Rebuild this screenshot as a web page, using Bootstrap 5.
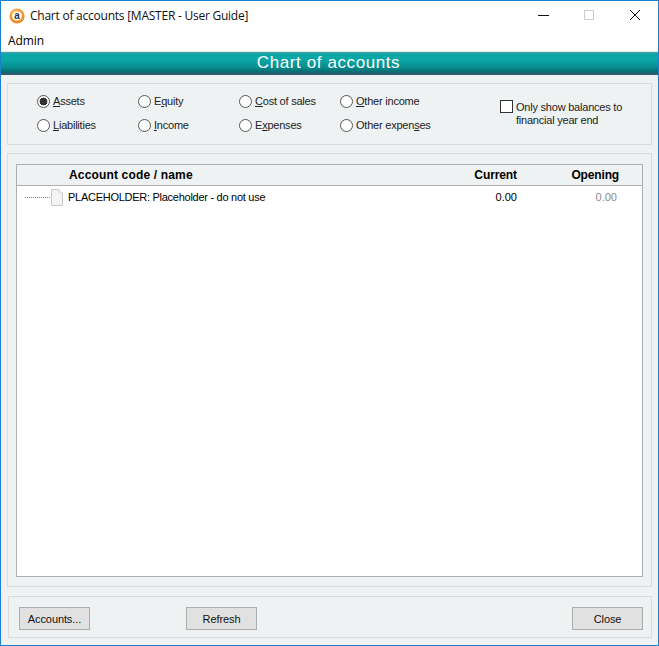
<!DOCTYPE html>
<html lang="en">
<head>
<meta charset="utf-8">
<title>Chart of accounts</title>
<link rel="stylesheet" href="https://cdn.jsdelivr.net/npm/bootstrap@5.3.0/dist/css/bootstrap.min.css">
<style>
html,body{height:100%;}
body{background:#eff2f3;font-family:"Liberation Sans",Arial,sans-serif;font-size:12px;color:#000;overflow:hidden;}
.win{width:659px;height:646px;border:1px solid #1b80d0;background:#eff2f3;}
.tbar{height:30px;background:#fff;padding-left:8px;font-family:"Open Sans",sans-serif;font-size:12px;letter-spacing:-.24px;color:#111;flex:none;}
.appic{margin-right:5px;flex:none;}
.wbtns{width:120px;}
.wbtns svg{display:block;}
.menub{height:20px;background:#fff;padding-left:7px;font-family:"Open Sans",sans-serif;font-size:12px;line-height:20px;letter-spacing:-.1px;flex:none;}
.gapb{height:1px;background:#e4e6e7;flex:none;}
.hband{height:23px;flex:none;padding-right:2px;background:linear-gradient(#5a9ea2 0,#09a9a8 2px,#0aa5a4 8px,#078f8f 15px,#056c70 20px,#33596e 22px);color:#fff;font-size:17px;line-height:22px;text-align:center;letter-spacing:.6px;}
.pnl{border:1px solid #d8dcdd;background:#eff2f3;flex:none;}
.pfilter{height:62px;margin:8px 6px 0 6px;padding:10px 0 0 29px;}
.rgrid{display:grid;grid-template-columns:repeat(4,101px);grid-auto-rows:24px;width:404px;flex:none;}
.ritem{display:flex;align-items:center;gap:3px;margin:0;height:14px;}
.ritem .form-check-input{margin:0;width:13px;height:13px;background-color:#fff;border:1.5px solid #555;flex:none;}
.ritem .form-check-input:checked{background-color:#fff;border-color:#555;background-image:radial-gradient(circle,#333 0 3.6px,transparent 4.2px);background-size:100% 100%;}
.ritem .form-check-input:focus{box-shadow:none;}
.chkbox{margin-top:6px;margin-left:59px;gap:3px;line-height:13px;height:28px;}
.chkbox .form-check-input{width:13px;height:13px;margin:0;border:1.5px solid #333;border-radius:0;background-color:#fff;flex:none;}
.lbl{font-size:11px;color:#222;letter-spacing:-.22px;white-space:nowrap;padding-top:1px;}
.plist{height:434px;margin:8px 6px 0 6px;padding:10px 8px 9px 8px;}
.tblwrap{height:100%;border:1px solid #acafb0;background:#fff;}
.thd{height:21px;background:#eff2f3;border-bottom:1px solid #acafb0;font-weight:700;font-size:12px;letter-spacing:.16px;line-height:20px;}
.cname{width:440px;padding-left:52px;}
.ccur{width:60px;text-align:right;letter-spacing:-.1px;}
.copen{width:102px;text-align:right;letter-spacing:-.15px;}
.trow{height:23px;padding-left:8px;font-size:11px;letter-spacing:-.27px;line-height:23px;}
.dots{width:25px;border-top:1px dotted #777;height:0;}
.fic{margin:0 4px 0 0;flex:none;}
.rname{width:398px;white-space:nowrap;}
.rcur{width:51px;text-align:right;letter-spacing:0;}
.ropen{width:100px;text-align:right;color:#8c8c8c;letter-spacing:0;}
.pfoot{height:42px;margin:9px 6px 0 7px;padding:10px 8px 0 10px;}
.wbtn{width:71px;height:23px;padding:0;font-size:11px;background:#e1e1e1;border:1px solid #adadad;border-radius:0;color:#111;line-height:20px;letter-spacing:-.1px;}
.wbtn:hover{background:#e1e1e1;}
.refresh{margin-left:96px;}
.closeb{margin-left:auto;}
</style>
</head>
<body>
<div class="win d-flex flex-column">
  <div class="tbar d-flex align-items-center">
    <svg width="16" height="16" viewBox="0 0 16 16" class="appic">
      <defs><radialGradient id="g" cx=".4" cy=".3" r=".8"><stop offset="0" stop-color="#ffc060"/><stop offset="1" stop-color="#ec7d10"/></radialGradient></defs>
      <circle cx="8" cy="8" r="7.6" fill="url(#g)"/>
      <ellipse cx="8" cy="8" rx="5" ry="4.6" fill="#fff"/>
      <text x="8" y="11.2" font-size="10" font-weight="700" text-anchor="middle" font-family="Liberation Sans" fill="#333">a</text>
    </svg>
    <span>Chart of accounts [MASTER - User Guide]</span>
    <div class="ms-auto d-flex align-items-center wbtns">
      <svg width="120" height="16" viewBox="0 0 120 16">
        <path d="M0 7.5H11" stroke="#111" fill="none"/>
        <rect x="46.5" y="2.5" width="9" height="9" stroke="#ccc" fill="none"/>
        <path d="M92 2L102 12M102 2L92 12" stroke="#111" fill="none"/>
      </svg>
    </div>
  </div>
  <div class="menub">Admin</div>
  <div class="gapb"></div>
  <div class="hband">Chart of accounts</div>

  <div class="pnl pfilter d-flex">
    <div class="rgrid">
      <label class="ritem"><input class="form-check-input" type="radio" name="t" checked><span class="lbl"><u>A</u>ssets</span></label>
      <label class="ritem"><input class="form-check-input" type="radio" name="t"><span class="lbl">E<u>q</u>uity</span></label>
      <label class="ritem"><input class="form-check-input" type="radio" name="t"><span class="lbl"><u>C</u>ost of sales</span></label>
      <label class="ritem"><input class="form-check-input" type="radio" name="t"><span class="lbl"><u>O</u>ther income</span></label>
      <label class="ritem"><input class="form-check-input" type="radio" name="t"><span class="lbl"><u>L</u>iabilities</span></label>
      <label class="ritem"><input class="form-check-input" type="radio" name="t"><span class="lbl"><u>I</u>ncome</span></label>
      <label class="ritem"><input class="form-check-input" type="radio" name="t"><span class="lbl">E<u>x</u>penses</span></label>
      <label class="ritem"><input class="form-check-input" type="radio" name="t"><span class="lbl">Other expen<u>s</u>es</span></label>
    </div>
    <label class="d-flex chkbox"><input class="form-check-input" type="checkbox"><span class="lbl">Only show balances to<br>financial year end</span></label>
  </div>

  <div class="pnl plist">
    <div class="tblwrap">
      <div class="thd d-flex">
        <div class="cname">Account code / name</div>
        <div class="ccur">Current</div>
        <div class="copen">Opening</div>
      </div>
      <div class="trow d-flex align-items-center">
        <div class="dots"></div>
        <svg class="fic" width="14" height="17" viewBox="0 0 14 17"><path d="M1.5.5H9L12.5 4V16.5H1.5Z" fill="#f4f4f4" stroke="#c8c8c8"/><path d="M9 .5V4H12.5" fill="#fff" stroke="#d4d4d4"/></svg>
        <div class="rname">PLACEHOLDER: Placeholder - do not use</div>
        <div class="rcur">0.00</div>
        <div class="ropen">0.00</div>
      </div>
    </div>
  </div>

  <div class="pnl pfoot d-flex align-items-start">
    <button type="button" class="btn wbtn">Accounts...</button>
    <button type="button" class="btn wbtn refresh">Refresh</button>
    <button type="button" class="btn wbtn closeb">Close</button>
  </div>
</div>
</body>
</html>
